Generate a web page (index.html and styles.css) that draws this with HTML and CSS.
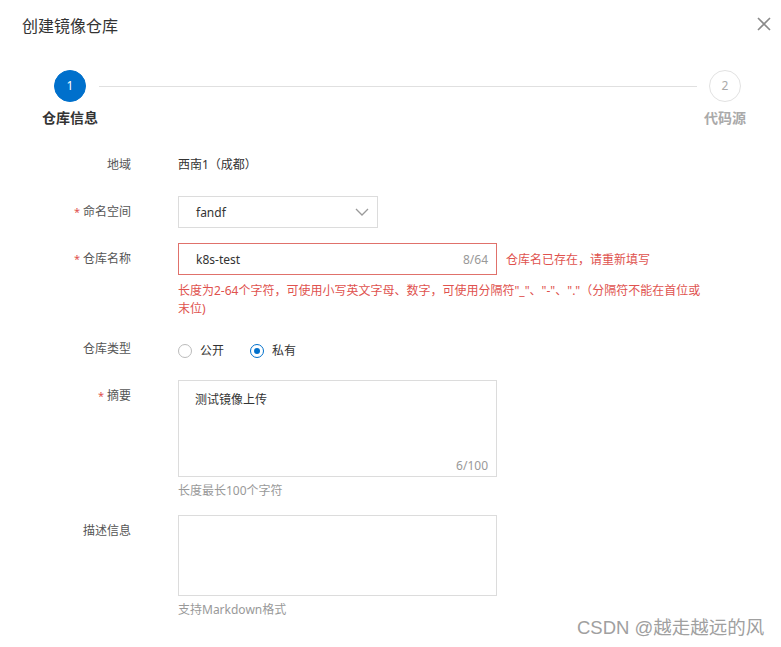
FILE: index.html
```html
<!DOCTYPE html>
<html lang="zh-CN">
<head>
<meta charset="utf-8">
<title>创建镜像仓库</title>
<link rel="stylesheet" href="styles.css">
</head>
<body>
<div class="dialog">
  <div class="header">
    <div class="title">创建镜像仓库</div>
    <button class="close" aria-label="关闭">
      <svg width="14" height="14" viewBox="0 0 14 14"><path d="M1 1L13 13M13 1L1 13" stroke="#8a8a8a" stroke-width="1.6" fill="none"/></svg>
    </button>
  </div>

  <div class="steps">
    <div class="step active">
      <div class="dot">1</div>
      <div class="step-label">仓库信息</div>
    </div>
    <div class="step-line"></div>
    <div class="step">
      <div class="dot">2</div>
      <div class="step-label">代码源</div>
    </div>
  </div>

  <div class="form">
    <div class="row">
      <div class="label">地域</div>
      <div class="value">西南1（成都）</div>
    </div>

    <div class="row">
      <div class="label"><span class="req">*</span>命名空间</div>
      <div class="control">
        <div class="select">
          <span>fandf</span>
          <svg class="chev" width="14" height="8" viewBox="0 0 14 8"><path d="M1 1L7 7L13 1" stroke="#9a9a9a" stroke-width="1.3" fill="none"/></svg>
        </div>
      </div>
    </div>

    <div class="row">
      <div class="label"><span class="req">*</span>仓库名称</div>
      <div class="control">
        <div class="inline">
          <div class="input error">
            <span>k8s-test</span>
            <span class="count">8/64</span>
          </div>
          <span class="err-msg">仓库名已存在，请重新填写</span>
        </div>
        <div class="hint red">长度为2-64个字符，可使用小写英文字母、数字，可使用分隔符"_"、"-"、"."（分隔符不能在首位或<br>末位)</div>
      </div>
    </div>

    <div class="row">
      <div class="label">仓库类型</div>
      <div class="radios">
        <label class="radio"><span class="circle"></span>公开</label>
        <label class="radio checked"><span class="circle"></span>私有</label>
      </div>
    </div>

    <div class="row">
      <div class="label"><span class="req">*</span>摘要</div>
      <div class="control">
        <div class="textarea tall">
          <span>测试镜像上传</span>
          <span class="tcount">6/100</span>
        </div>
        <div class="hint">长度最长100个字符</div>
      </div>
    </div>

    <div class="row">
      <div class="label">描述信息</div>
      <div class="control">
        <div class="textarea short"></div>
        <div class="hint">支持Markdown格式</div>
      </div>
    </div>
  </div>

  <div class="watermark">CSDN @越走越远的风</div>
</div>
</body>
</html>
```

FILE: styles.css
```css
* { box-sizing: border-box; }
html, body {
  margin: 0;
  padding: 0;
  background: #fff;
}
body {
  font-family: "Noto Sans", "Noto Sans CJK SC", sans-serif;
  font-size: 12px;
  color: #333;
}
.dialog {
  position: relative;
  width: 781px;
  height: 647px;
  overflow: hidden;
}
.header {
  display: flex;
  justify-content: space-between;
  align-items: flex-start;
  padding: 14px 10px 0 22px;
}
.title {
  font-size: 16px;
  line-height: 24px;
  color: #333;
}
.close {
  border: 0;
  background: none;
  padding: 0;
  margin-top: 3px;
  width: 14px;
  height: 14px;
  display: flex;
}
.steps {
  display: flex;
  align-items: flex-start;
  margin-top: 32px;
  padding-left: 42px;
  padding-right: 28px;
}
.step {
  width: 56px;
  display: flex;
  flex-direction: column;
  align-items: center;
}
.dot {
  width: 32px;
  height: 32px;
  border-radius: 50%;
  border: 1px solid #e2e2e2;
  color: #aaa;
  font-size: 12px;
  line-height: 30px;
  text-align: center;
  background: #fff;
}
.step.active .dot {
  background: #0070cc;
  border-color: #0070cc;
  color: #fff;
}
.step-label {
  margin-top: 6px;
  font-size: 14px;
  line-height: 20px;
  font-weight: 700;
  color: #aaa;
  white-space: nowrap;
}
.step.active .step-label { color: #333; }
.step-line {
  flex: 1;
  height: 1px;
  background: #e0e0e0;
  margin-top: 16px;
  margin-left: 1px;
  margin-right: 0;
}
.form {
  margin-top: 21px;
  display: flex;
  flex-direction: column;
  gap: 15px;
}
.row {
  display: grid;
  grid-template-columns: 131px 1fr;
  column-gap: 47px;
  align-items: start;
}
.label {
  text-align: right;
  line-height: 32px;
  color: #555;
  white-space: nowrap;
}
.req {
  color: #e0524e;
  margin-right: 3px;
  font-size: 11px;
}
.value {
  line-height: 32px;
  color: #333;
}
.select {
  width: 200px;
  height: 32px;
  border: 1px solid #dcdcdc;
  display: flex;
  align-items: center;
  justify-content: space-between;
  padding: 0 4px 0 17px;
  color: #333;
}
.chev { margin-right: 4px; }
.inline {
  display: flex;
  align-items: center;
}
.input {
  width: 319px;
  height: 32px;
  border: 1px solid #dcdcdc;
  display: flex;
  align-items: center;
  padding: 0 8px 0 17px;
}
.input.error { border-color: #e0716b; }
.count {
  margin-left: auto;
  color: #999;
}
.err-msg {
  margin-left: 9px;
  color: #e0524e;
}
.hint {
  margin-top: 5px;
  line-height: 18px;
  color: #999;
}
.hint.red {
  color: #e0524e;
  margin-top: 7px;
}
.radios {
  display: flex;
  height: 32px;
  padding-top: 8px;
  gap: 26px;
}
.radio {
  display: flex;
  align-items: center;
  height: 20px;
  line-height: 20px;
  color: #333;
}
.circle {
  width: 14px;
  height: 14px;
  border: 1px solid #bbb;
  border-radius: 50%;
  margin-right: 8px;
  display: flex;
  align-items: center;
  justify-content: center;
}
.radio.checked .circle { border-color: #0070cc; }
.radio.checked .circle::after {
  content: "";
  width: 6px;
  height: 6px;
  border-radius: 50%;
  background: #0070cc;
}
.textarea {
  position: relative;
  width: 319px;
  border: 1px solid #dcdcdc;
  padding: 9px 16px;
  line-height: 20px;
  color: #333;
}
.textarea.tall { height: 97px; }
.textarea.short { height: 81px; }
.tcount {
  position: absolute;
  right: 8px;
  bottom: 0;
  color: #999;
  line-height: 20px;
}
.watermark {
  position: absolute;
  left: 577px;
  top: 616px;
  font-family: "Liberation Sans", "Noto Sans CJK SC", sans-serif;
  font-size: 18.5px;
  line-height: 24px;
  color: #a0a0a0;
  white-space: nowrap;
}
```
